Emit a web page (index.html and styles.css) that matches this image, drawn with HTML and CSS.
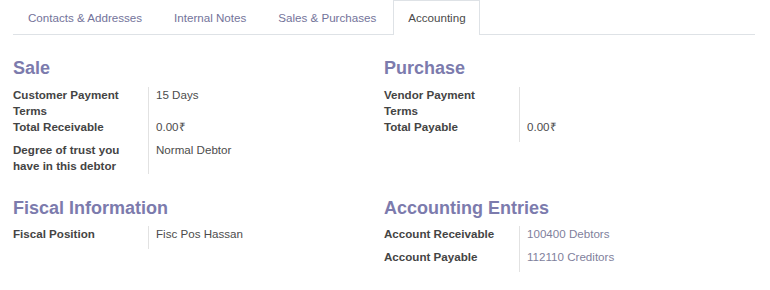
FILE: index.html
```html
<!DOCTYPE html>
<html>
<head>
<meta charset="utf-8">
<link rel="stylesheet" href="styles.css">
</head>
<body>
<div class="sheet">
  <ul class="tabs">
    <li class="tab">Contacts &amp; Addresses</li>
    <li class="tab">Internal Notes</li>
    <li class="tab">Sales &amp; Purchases</li>
    <li class="tab active">Accounting</li>
  </ul>
  <div class="pane">
    <div class="row">
      <div class="group">
        <h2 class="title">Sale</h2>
        <div class="fields">
          <div class="label">Customer Payment Terms</div>
          <div class="value">15 Days</div>
          <div class="label">Total Receivable</div>
          <div class="value">0.00₹</div>
          <div class="label">Degree of trust you have in this debtor</div>
          <div class="value">Normal Debtor</div>
        </div>
      </div>
      <div class="group">
        <h2 class="title">Purchase</h2>
        <div class="fields">
          <div class="label">Vendor Payment Terms</div>
          <div class="value"></div>
          <div class="label">Total Payable</div>
          <div class="value">0.00₹</div>
        </div>
      </div>
    </div>
    <div class="row second">
      <div class="group">
        <h2 class="title">Fiscal Information</h2>
        <div class="fields">
          <div class="label">Fiscal Position</div>
          <div class="value">Fisc Pos Hassan</div>
        </div>
      </div>
      <div class="group">
        <h2 class="title">Accounting Entries</h2>
        <div class="fields">
          <div class="label">Account Receivable</div>
          <div class="value link">100400 Debtors</div>
          <div class="label">Account Payable</div>
          <div class="value link">112110 Creditors</div>
        </div>
      </div>
    </div>
  </div>
</div>
</body>
</html>
```
FILE: styles.css
```css
html, body {
  margin: 0;
  padding: 0;
  background: #ffffff;
  font-family: "Liberation Sans", Arial, sans-serif;
  color: #4c4c4c;
}
.sheet {
  width: 742px;
  margin-left: 13px;
}
.tabs {
  list-style: none;
  margin: 0;
  padding: 0;
  display: flex;
  border-bottom: 1px solid #dee2e6;
}
.tab {
  font-size: 11.6px;
  line-height: 33px;
  padding: 0 14px;
  border: 1px solid transparent;
  border-bottom: none;
  color: #73739a;
  margin-right: 2px;
}
.tab.active {
  color: #4a4a4a;
  border-color: #dee2e6;
  background: #fff;
  margin-bottom: -1px;
  padding: 0 13px 1px 14px;
}
.pane {
  padding-top: 22px;
}
.row {
  display: grid;
  grid-template-columns: 371px 371px;
  margin-bottom: 23px;
  align-items: start;
}
.title {
  margin: 0 0 8px 0;
  font-size: 18px;
  line-height: 22px;
  font-weight: bold;
  color: #7c7bad;
}
.second .title {
  margin-bottom: 7px;
}
.fields {
  display: grid;
  grid-template-columns: 135px 1fr;
}
.label {
  font-size: 11.6px;
  line-height: 16px;
  font-weight: bold;
  color: #444;
  padding-right: 10px;
}
.value {
  font-size: 11.6px;
  line-height: 16px;
  border-left: 1px solid #e2e2e2;
  padding: 0 0 7px 7px;
  color: #4c4c4c;
}
.value.link {
  color: #7f7f9c;
}
```
